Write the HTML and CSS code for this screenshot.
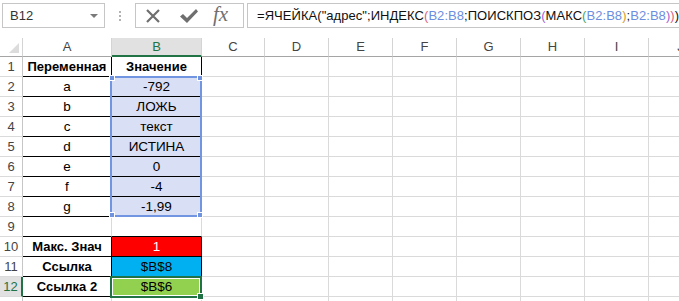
FILE: index.html
```html
<!DOCTYPE html>
<html>
<head>
<meta charset="utf-8">
<link rel="stylesheet" href="styles.css">
</head>
<body>
<div class="app">
  <div class="topbar">
    <div class="namebox"><span class="nb-text">B12</span><span class="nb-arrow"></span></div>
    <div class="grip"><i></i><i></i><i></i></div>
    <div class="fbtns">
      <svg class="ico ico-x" width="16" height="16" viewBox="0 0 16 16"><path d="M2 2 L14 14 M14 2 L2 14" stroke="#6f6f6f" stroke-width="2.2" fill="none"/></svg>
      <svg class="ico ico-check" width="20" height="16" viewBox="0 0 20 16"><path d="M1 8.5 L4 6 L8 10 L17 1 L19 3.5 L8 15 Z" fill="#6f6f6f"/></svg>
      <span class="fx">fx</span>
    </div>
    <div class="formula">=ЯЧЕЙКА("адрес";ИНДЕКС<span class="p1">(</span><span class="rg">B2:B8</span>;ПОИСКПОЗ<span class="p2">(</span>МАКС<span class="p3">(</span><span class="rg">B2:B8</span><span class="p3c">)</span>;<span class="rg">B2:B8</span><span class="p2">)</span><span class="p1">)</span>)</div>
  </div>

  <div class="sheet">
    <div class="row hdr">
      <div class="corner"><span class="tri"></span></div>
      <div class="ch ca">A</div>
      <div class="ch cb sel">B</div>
      <div class="ch cc">C</div>
      <div class="ch cd">D</div>
      <div class="ch cd">E</div>
      <div class="ch cd">F</div>
      <div class="ch cd">G</div>
      <div class="ch cd">H</div>
      <div class="ch cd">I</div>
      <div class="ch cd">J</div>
    </div>

    <div class="row"><div class="rh">1</div><div class="c ca br bb bold">Переменная</div><div class="c cb br bb bold">Значение</div><div class="rest"></div></div>
    <div class="row"><div class="rh">2</div><div class="c ca br bb">a</div><div class="c cb br bb hl">-792</div><div class="rest"></div></div>
    <div class="row"><div class="rh">3</div><div class="c ca br bb">b</div><div class="c cb br bb hl">ЛОЖЬ</div><div class="rest"></div></div>
    <div class="row"><div class="rh">4</div><div class="c ca br bb">c</div><div class="c cb br bb hl">текст</div><div class="rest"></div></div>
    <div class="row"><div class="rh">5</div><div class="c ca br bb">d</div><div class="c cb br bb hl">ИСТИНА</div><div class="rest"></div></div>
    <div class="row"><div class="rh">6</div><div class="c ca br bb">e</div><div class="c cb br bb hl">0</div><div class="rest"></div></div>
    <div class="row"><div class="rh">7</div><div class="c ca br bb">f</div><div class="c cb br bb hl">-4</div><div class="rest"></div></div>
    <div class="row"><div class="rh">8</div><div class="c ca br bb">g</div><div class="c cb br bb hl">-1,99</div><div class="rest"></div></div>
    <div class="row"><div class="rh">9</div><div class="c ca bb"></div><div class="c cb bb"></div><div class="rest"></div></div>
    <div class="row"><div class="rh">10</div><div class="c ca br bb bold">Макс. Знач</div><div class="c cb br bb red">1</div><div class="rest"></div></div>
    <div class="row"><div class="rh">11</div><div class="c ca br bb bold">Ссылка</div><div class="c cb br bb blue">$B$8</div><div class="rest"></div></div>
    <div class="row"><div class="rh sel">12</div><div class="c ca br bb bold">Ссылка 2</div><div class="c cb br bb green">$B$6</div><div class="rest"></div></div>
    <div class="row"><div class="rh"></div><div class="c ca"></div><div class="c cb"></div><div class="rest"></div></div>

    <div class="range">
      <span class="hd tl"></span><span class="hd tr"></span><span class="hd bl"></span><span class="hd br2"></span>
    </div>
    <div class="selection"><span class="fill"></span></div>
  </div>
</div>
</body>
</html>
```

FILE: styles.css
```css
* { box-sizing: border-box; }
html, body { margin: 0; padding: 0; background: #fff; }
body { width: 679px; height: 301px; overflow: hidden; font-family: "Liberation Sans", Arial, sans-serif; }

.app { width: 679px; height: 301px; overflow: hidden; }

.topbar {
  height: 38px;
  display: flex;
  align-items: flex-start;
  padding-top: 3px;
  padding-left: 2px;
}
.namebox {
  width: 103px;
  height: 25px;
  border: 1px solid #c6c6c6;
  display: flex;
  align-items: center;
  justify-content: space-between;
  padding: 0 6px 0 7px;
}
.nb-text { font-size: 13px; color: #333; }
.nb-arrow {
  width: 0; height: 0;
  border-left: 4px solid transparent;
  border-right: 4px solid transparent;
  border-top: 4px solid #7a7a7a;
}
.grip {
  width: 30px;
  height: 25px;
  display: flex;
  flex-direction: column;
  align-items: center;
  justify-content: center;
  gap: 2px;
}
.grip i { display: block; width: 2px; height: 2px; background: #b3b3b3; }
.fbtns {
  width: 109px;
  height: 25px;
  border: 1px solid #c6c6c6;
  display: flex;
  align-items: center;
  padding-left: 9px;
}
.ico-x { margin-right: 18px; }
.ico-check { margin-right: 14px; }
.fx {
  font-family: "Liberation Serif", "Times New Roman", serif;
  font-style: italic;
  font-size: 21px;
  color: #707070;
  line-height: 1;
  margin-top: -2px;
}
.formula {
  margin-left: 3px;
  flex: 1;
  height: 25px;
  border: 1px solid #c6c6c6;
  border-right: none;
  padding-left: 9px;
  font-size: 13px;
  letter-spacing: 0.05px;
  line-height: 23px;
  color: #111;
  white-space: nowrap;
  overflow: hidden;
}
.rg { color: #6b8ee0; }
.p1 { color: #e0607e; }
.p2 { color: #a55fd2; }
.p3 { color: #3fa46a; }
.p3c { color: #d49a2e; }

/* sheet */
.sheet { position: relative; width: 679px; }
.row { display: flex; height: 20px; }
.row.hdr { height: 19px; }

.corner {
  width: 23px; flex: none;
  border-right: 1px solid #d4d4d4;
  border-bottom: 1px solid #a5a5a5;
  position: relative;
}
.tri {
  position: absolute;
  right: 3px; bottom: 3px;
  width: 0; height: 0;
  border-left: 10px solid transparent;
  border-bottom: 10px solid #dcdcdc;
}
.ch {
  flex: none;
  border-right: 1px solid #d4d4d4;
  border-bottom: 1px solid #a5a5a5;
  font-size: 13px;
  color: #444;
  text-align: center;
  line-height: 18px;
}
.ch.sel {
  background: #e1e1e1;
  color: #217346;
  border-bottom: 2px solid #217346;
}
.ca { width: 89px; flex: none; }
.cb { width: 90px; flex: none; }
.cc { width: 63px; }
.cd { width: 64px; }

.rh {
  width: 23px; flex: none;
  border-right: 1px solid #c6c6c6;
  border-bottom: 1px solid #dadada;
  font-size: 13px;
  color: #444;
  text-align: center;
  line-height: 19px;
}
.rh.sel {
  background: #e1e1e1;
  color: #217346;
  border-right: 2px solid #217346;
}
.c {
  border-right: 1px solid #dadada;
  border-bottom: 1px solid #dadada;
  font-size: 13.5px;
  color: #000;
  text-align: center;
  line-height: 19px;
  white-space: nowrap;
}
.c.br { border-right-color: #000; }
.c.bb { border-bottom-color: #000; }
.c.bold { font-weight: bold; font-size: 13px; }
.c.hl { background: #d9dff5; }
.c.red { background: #ff0000; color: #fff; }
.c.blue { background: #00b0f0; }
.c.green { background: #92d050; }
.rest {
  flex: 1;
  border-bottom: 1px solid #dadada;
  background: repeating-linear-gradient(to right, transparent 0 62px, #dadada 62px 63px, transparent 63px 64px);
}

.range {
  position: absolute;
  left: 110px; top: 38px;
  width: 92px; height: 141px;
  border: 2px solid #7195e0;
}
.hd {
  position: absolute;
  width: 6px; height: 6px;
  background: #6f93df;
  border: 1px solid #fff;
}
.hd.tl { left: -3px; top: -3px; }
.hd.tr { right: -3px; top: -3px; }
.hd.bl { left: -3px; bottom: -3px; }
.hd.br2 { right: -3px; bottom: -3px; }

.selection {
  position: absolute;
  left: 110px; top: 238px;
  width: 92px; height: 22px;
  border: 2px solid #217346;
  box-shadow: inset 0 0 0 1px #fff;
}
.fill {
  position: absolute;
  right: -4px; bottom: -4px;
  width: 7px; height: 7px;
  background: #217346;
  border: 1px solid #fff;
}
```
